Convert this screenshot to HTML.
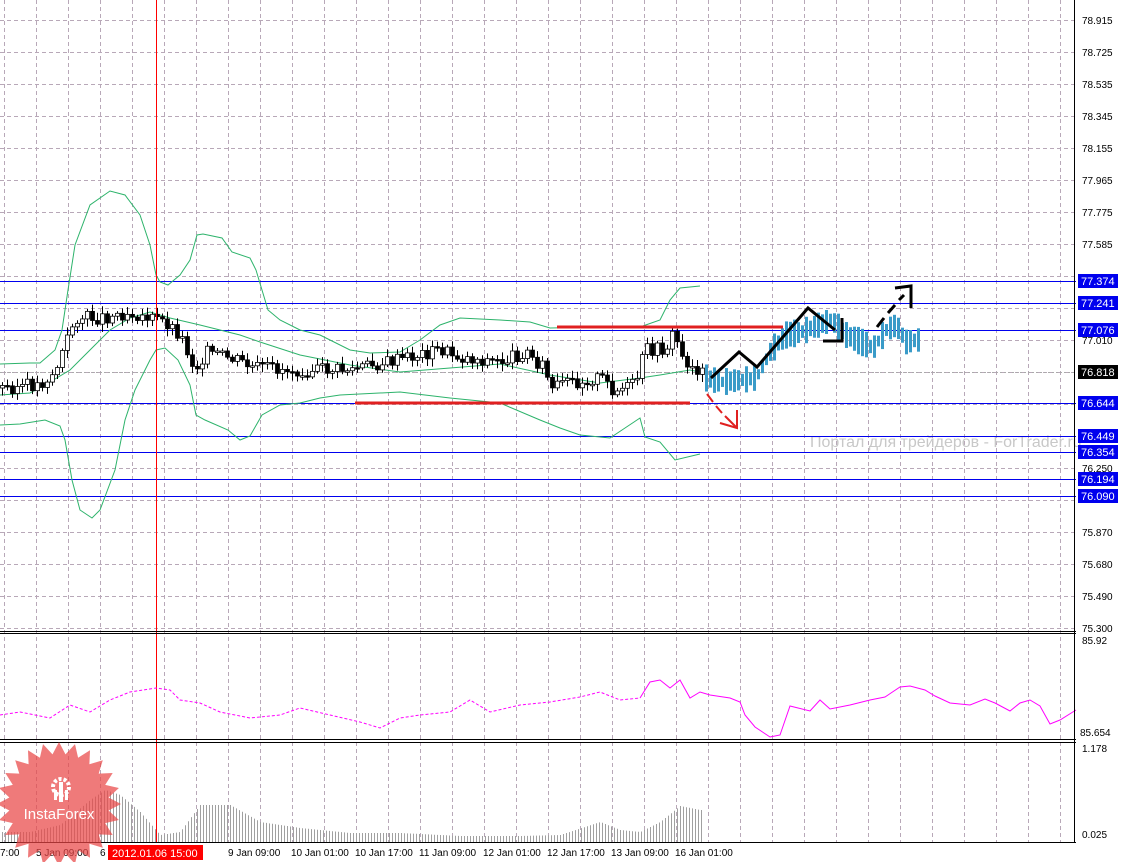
<!DOCTYPE html>
<html><head><meta charset="utf-8"><style>
html,body{margin:0;padding:0;background:#fff;width:1127px;height:862px;overflow:hidden}
svg{display:block;font-family:"Liberation Sans",sans-serif}
</style></head><body>
<svg id="s" width="1127" height="862" xmlns="http://www.w3.org/2000/svg">
<rect width="1127" height="862" fill="#fff"/>
<g id="grid" stroke="#b8a8b8" stroke-dasharray="4,3" stroke-width="1"></g>
<text x="810" y="447" font-size="16" fill="#c8c8c8">Портал для трейдеров - ForTrader.ru</text>
<g stroke="#0000ee" stroke-width="1">
<line x1="0" y1="281.5" x2="1076" y2="281.5"/><line x1="0" y1="303.5" x2="1076" y2="303.5"/>
<line x1="0" y1="330.5" x2="1076" y2="330.5"/><line x1="0" y1="403.5" x2="1076" y2="403.5"/>
<line x1="0" y1="436.5" x2="1076" y2="436.5"/><line x1="0" y1="452.5" x2="1076" y2="452.5"/>
<line x1="0" y1="479.5" x2="1076" y2="479.5"/><line x1="0" y1="496.5" x2="1076" y2="496.5"/>
</g>
<line x1="0" y1="372.5" x2="1076" y2="372.5" stroke="#aaa" stroke-dasharray="2,2"/>
<g fill="none" stroke="#2db36b" stroke-width="1">
<polyline points="0,364 30,363 40,363 55,350 62,330 68,290 75,245 90,205 110,191 125,195 140,215 150,245 156,275 160,282 168,285 180,275 190,260 197,235 203,234 222,238 232,252 250,258 256,270 268,310 280,320 300,330 320,335 350,350 370,353 400,352 420,340 440,325 460,318 500,320 530,322 550,328 600,327 640,327 660,320 670,300 680,288 700,286"/>
<polyline points="0,395 30,393 45,385 70,370 90,350 110,330 130,318 150,312 170,318 200,325 240,335 260,342 300,355 350,365 400,372 450,368 500,364 550,375 600,383 640,378 660,375 690,370 700,372"/>
<polyline points="0,425 20,424 45,420 60,426 65,440 72,480 80,510 92,518 100,510 115,470 125,420 135,390 150,360 156,350 165,348 178,360 190,385 196,415 205,420 228,430 240,440 250,436 262,415 280,405 300,403 320,398 340,395 400,392 450,398 500,403 540,420 560,428 580,435 610,438 625,428 640,418 645,437 660,442 675,460 700,454"/>
</g>
<g id="c"></g>
<g id="f" fill="#3a9bc8"></g>
<g stroke="#e02020" stroke-width="3" fill="none">
<line x1="557" y1="327" x2="783" y2="327"/>
<line x1="355" y1="403" x2="690" y2="403"/>
<polyline stroke-width="2" points="707,394 713,402"/><polyline stroke-width="2" points="716,406 722,413"/><polyline stroke-width="2" points="725,416 736,427"/>
<polyline stroke-width="2" points="720,423 737,428 737,410"/>
</g>
<g stroke="#000" stroke-width="3" fill="none">
<polyline points="711,378 739,352 757,367 808,308 835,330"/>
<polyline points="823,341 842,341 842,318"/>
<polyline points="877,327 884,318"/><polyline points="888,313 895,305"/><polyline points="899,300 904,295"/>
<polyline points="895,288 911,286 911,308"/>
</g>
<line x1="156.5" y1="0" x2="156.5" y2="842" stroke="#ff0000" stroke-width="1"/>
<g id="rsi" fill="none" stroke="#ff00ff" stroke-width="1"></g>
<g id="vol" stroke="#a0a0a0" stroke-width="1"></g>
<g stroke="#000" stroke-width="1">
<line x1="0" y1="631.5" x2="1076" y2="631.5"/><line x1="0" y1="633.5" x2="1076" y2="633.5"/>
<line x1="0" y1="739.5" x2="1076" y2="739.5"/><line x1="0" y1="742.5" x2="1076" y2="742.5"/>
<line x1="0" y1="842.5" x2="1076" y2="842.5"/>
<line x1="1074.5" y1="0" x2="1074.5" y2="842"/>
</g>
<g font-size="10" fill="#000" id="ax"></g>
<g font-size="11">
<rect x="1078" y="274" width="40" height="14" fill="#0000ee"/><text x="1081" y="285" fill="#fff">77.374</text>
<rect x="1078" y="296" width="40" height="14" fill="#0000ee"/><text x="1081" y="307" fill="#fff">77.241</text>
<rect x="1078" y="323" width="40" height="14" fill="#0000ee"/><text x="1081" y="334" fill="#fff">77.076</text>
<rect x="1078" y="365" width="40" height="14" fill="#000"/><text x="1081" y="376" fill="#fff">76.818</text>
<rect x="1078" y="396" width="40" height="14" fill="#0000ee"/><text x="1081" y="407" fill="#fff">76.644</text>
<rect x="1078" y="429" width="40" height="14" fill="#0000ee"/><text x="1081" y="440" fill="#fff">76.449</text>
<rect x="1078" y="445" width="40" height="14" fill="#0000ee"/><text x="1081" y="456" fill="#fff">76.354</text>
<rect x="1078" y="472" width="40" height="14" fill="#0000ee"/><text x="1081" y="483" fill="#fff">76.194</text>
<rect x="1078" y="489" width="40" height="14" fill="#0000ee"/><text x="1081" y="500" fill="#fff">76.090</text>
</g>
<g font-size="10" fill="#000">
<text x="0" y="856">7:00</text><text x="36" y="856">5 Jan 09:00</text><text x="100" y="856">6</text>
<text x="228" y="856">9 Jan 09:00</text><text x="291" y="856">10 Jan 01:00</text><text x="355" y="856">10 Jan 17:00</text>
<text x="419" y="856">11 Jan 09:00</text><text x="483" y="856">12 Jan 01:00</text><text x="547" y="856">12 Jan 17:00</text>
<text x="611" y="856">13 Jan 09:00</text><text x="675" y="856">16 Jan 01:00</text>
</g>
<rect x="108" y="845" width="95" height="15" fill="#ff0000"/>
<text x="112" y="857" font-size="11" fill="#fff">2012.01.06 15:00</text>
<g opacity="0.72"><polygon id="star" fill="#e94646"/></g>
<g fill="#fff">
<circle cx="61" cy="787" r="8" fill="none" stroke="#fff" stroke-width="4" stroke-dasharray="3,2"/>
<rect x="59" y="782" width="4" height="20"/><rect x="54" y="790" width="3" height="10"/><rect x="65" y="790" width="3" height="10"/>
<text x="59" y="819" font-size="15" text-anchor="middle">InstaForex</text>
</g>
</svg>
<script>
(function(){
var NS="http://www.w3.org/2000/svg";
function el(p,t,a){var e=document.createElementNS(NS,t);for(var k in a)e.setAttribute(k,a[k]);p.appendChild(e);return e;}
var g=document.getElementById('grid');
for(var x=4;x<1074;x+=32)el(g,'line',{x1:x+.5,y1:0,x2:x+.5,y2:842});
for(var y=20;y<=628;y+=32)el(g,'line',{x1:0,y1:y+.5,x2:1074,y2:y+.5});
var ax=document.getElementById('ax');
var pl=["78.915","78.725","78.535","78.345","78.155","77.965","77.775","77.585","","","","","","","","","75.870","75.680","75.490","75.300"];
pl.forEach(function(t,i){if(t)el(ax,'text',{x:1082,y:24+32*i}).textContent=t;});
el(ax,'text',{x:1082,y:344}).textContent="77.010";
el(ax,'text',{x:1082,y:472}).textContent="76.250";
el(ax,'text',{x:1082,y:644}).textContent="85.92";
el(ax,'text',{x:1080,y:736}).textContent="85.654";
el(ax,'text',{x:1082,y:752}).textContent="1.178";
el(ax,'text',{x:1082,y:838}).textContent="0.025";
function interp(pts,x){for(var i=0;i<pts.length-1;i++){if(x<=pts[i+1][0]){var a=pts[i],b=pts[i+1];return a[1]+(b[1]-a[1])*(x-a[0])/(b[0]-a[0]);}}return pts[pts.length-1][1];}
var pp=[[0,388],[40,385],[55,372],[65,345],[75,318],[100,318],[130,312],[155,320],[165,322],[180,335],[195,370],[205,352],[240,362],[250,368],[300,370],[350,370],[400,360],[440,350],[460,358],[500,362],[525,352],[545,368],[550,392],[560,385],[600,378],[615,392],[635,385],[645,350],[665,350],[675,330],[680,358],[700,372],[705,374]];
var cg=document.getElementById('c');var prev=interp(pp,0);var seed=3;
function rnd(){seed=(seed*9301+49297)%233280;return seed/233280;}
for(var x=2;x<704;x+=5){var v=interp(pp,x)+(rnd()-.5)*14;var o=prev,cl=v;var tp=Math.min(o,cl),bt=Math.max(o,cl);if(bt-tp<1.5)bt=tp+1.5;
el(cg,'line',{x1:x+.5,y1:tp-2-rnd()*6,x2:x+.5,y2:bt+2+rnd()*6,stroke:'#000'});
el(cg,'rect',{x:x-1.5,y:tp,width:4,height:bt-tp,fill:cl<o?'#fff':'#000',stroke:'#000','stroke-width':0.8});prev=v;}
var fp=[[705,378],[720,382],[740,380],[755,378],[770,350],[785,335],[800,332],[830,320],[845,335],[860,342],[872,348],[885,330],[895,325],[905,342],[915,340]];
var f=document.getElementById('f');
for(var x=705;x<918;x+=4){var v=interp(fp,x);var h=10+rnd()*18;el(f,'rect',{x:x,y:v-h/2,width:3,height:h});}
var rp=[[0,715],[20,712],[50,718],[70,705],[90,712],[110,700],[130,692],[156,688],[170,690],[180,700],[200,703],[220,712],[250,718],[280,715],[300,708],[330,715],[360,722],[380,728],[400,718],[420,715],[450,712],[470,700],[490,712],[520,705],[550,702],[580,697],[600,692],[620,700],[640,698],[650,682],[660,680],[670,688],[680,680],[690,698],[700,692],[710,695],[730,698],[740,702],[745,715],[755,727],[770,737],[780,735],[790,706],[810,711],[820,700],[830,709],[850,705],[870,700],[885,697],[900,687],[910,686],[925,690],[935,696],[950,703],[970,705],[985,699],[995,703],[1010,711],[1020,703],[1030,700],[1040,706],[1050,724],[1060,720],[1076,710]];
var r=document.getElementById('rsi');
el(r,'polyline',{points:rp.filter(function(p){return p[0]<=640}).map(function(p){return p.join(',')}).join(' '),'stroke-dasharray':'3,2'});
el(r,'polyline',{points:rp.filter(function(p){return p[0]>=640}).map(function(p){return p.join(',')}).join(' ')});
var vp=[[0,832],[30,832],[60,825],[90,800],[105,790],[120,795],[140,812],[160,835],[180,832],[200,805],[230,805],[260,822],[300,828],[350,833],[400,833],[460,836],[520,836],[560,835],[600,822],[620,830],[640,832],[660,822],[680,806],[700,810]];
var vg=document.getElementById('vol');
for(var x=2;x<702;x+=3){el(vg,'line',{x1:x+.5,y1:interp(vp,x),x2:x+.5,y2:842});}
var st=[];for(var i=0;i<48;i++){var a=i*Math.PI/24;var rr=i%2?50:62;st.push((59+rr*Math.cos(a)).toFixed(1)+','+(804+rr*Math.sin(a)).toFixed(1));}
document.getElementById('star').setAttribute('points',st.join(' '));
})();
</script>
</body></html>
